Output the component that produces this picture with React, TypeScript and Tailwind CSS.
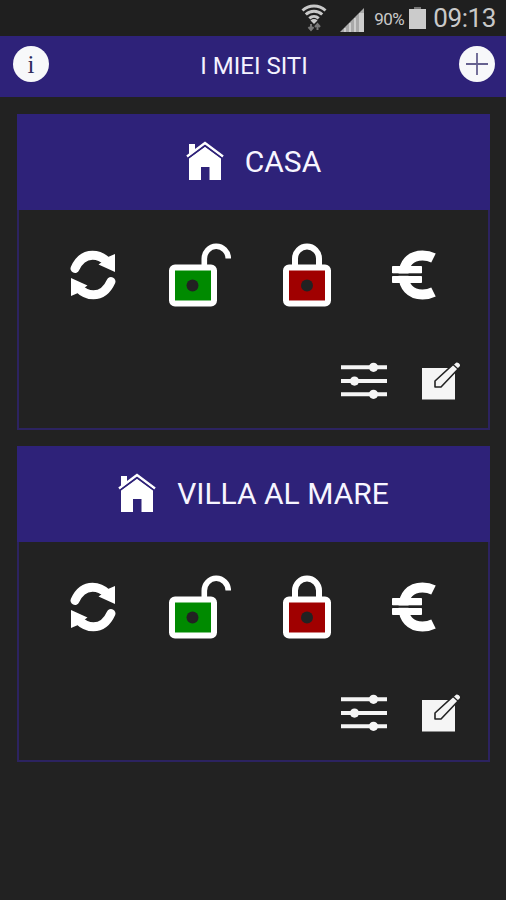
interface SiteProps {
  name: string;
}

function StatusBar() {
  return (
    <div className="flex h-9 items-center justify-end bg-[#1f1f1f] pr-[10px] text-[#c9c9c9]">
      <svg width="26" height="28" viewBox="0 0 26 28" fill="none" className="mr-[13px]">
        <path d="M1.5 6.500a17 17 0 0 1 23 0M4.800 10.500a12 12 0 0 1 16.400 0M8.300 14.300a7 7 0 0 1 9.400 0" stroke="#c9c9c9" strokeWidth="3" />
        <path d="M13 20l-3.500-3.500a5 5 0 0 1 7 0z" fill="#c9c9c9" />
        <path d="M10 20v6M7.500 23l2.500 3 2.500-3M16.500 26v-6M14 23l2.500-3 2.500 3" stroke="#777" strokeWidth="2" />
      </svg>
      <svg width="24" height="24" viewBox="0 0 24 24" className="mt-[3px] mr-[10px]">
        <path d="M0 24L24 0v24z" fill="#a9a9a9" />
        <path d="M4 20h2v4H4zM9 15h2v9H9zM14 10h2v14h-2zM19 5h5v19h-5z" fill="#cecece" />
      </svg>
      <span className="mt-[2px] mr-[5px] text-[17px] leading-none tracking-[-0.5px]">90%</span>
      <svg width="17" height="22" viewBox="0 0 17 22" className="mr-[7px]">
        <path d="M5 0h7v2H5z" fill="#777" />
        <path d="M0 2h17v20H0z" fill="#cbcbcb" />
      </svg>
      <span className="text-[26px] leading-none tracking-[-0.4px]">09:13</span>
    </div>
  );
}

function Header() {
  return (
    <header className="flex h-[61px] items-center justify-between bg-[#2e2279] pr-[11px] pb-[5px] pl-[13px]">
      <button className="flex size-9 items-center justify-center rounded-full bg-[#f7f8fa] font-['Liberation_Serif',serif] text-[25px] leading-none text-[#2d2b5c]">
        i
      </button>
      <h1 className="mt-[3px] text-[24px] leading-none text-[#f4f2ff]">I MIEI SITI</h1>
      <button className="flex size-9 items-center justify-center rounded-full bg-[#f7f8fa]">
        <svg width="22" height="22" viewBox="0 0 22 22">
          <path d="M11 0v22M0 11h22" stroke="#65618f" strokeWidth="1.800" />
        </svg>
      </button>
    </header>
  );
}

function HouseIcon() {
  return (
    <svg width="38" height="40" viewBox="0 0 38 40" className="mr-[21px] mb-[2px]">
      <path d="M3 14V3h6v6z" fill="#fff" />
      <path d="M1 15.500L19 2l18 13.500" fill="none" stroke="#fff" strokeWidth="2.400" />
      <path d="M3 17.500L19 5.800l16 11.700V39H23.500V26h-8.500v13H3z" fill="#fff" />
      <path d="M2 17.300L19 4.700l17 12.600" fill="none" stroke="#2e2279" strokeWidth="1.200" />
    </svg>
  );
}

function SyncArrow() {
  return (
    <>
      <path d="M6 19.500C10.500 9.500 16.500 6.200 23.500 6.200c6 0 10.500 2.300 14.500 6.300" fill="none" stroke="#fff" strokeWidth="9" strokeLinecap="round" />
      <path d="M46 5v18L29.500 15.500l3.500-2.500 6-5z" fill="#fff" />
    </>
  );
}

function SyncIcon() {
  return (
    <svg width="48" height="52" viewBox="0 0 48 52">
      <SyncArrow />
      <g transform="rotate(180 24 26)">
        <SyncArrow />
      </g>
    </svg>
  );
}

function UnlockIcon() {
  return (
    <svg width="62" height="64" viewBox="0 0 62 64">
      <path d="M35.300 24V16a12 12.500 0 0 1 24-0.500" fill="none" stroke="#fff" strokeWidth="5.600" />
      <rect x="3" y="24.500" width="42" height="36" rx="3" fill="#008a00" stroke="#fff" strokeWidth="6" />
      <circle cx="23.500" cy="42.500" r="6" fill="#222" />
    </svg>
  );
}

function LockIcon() {
  return (
    <svg width="48" height="64" viewBox="0 0 48 64">
      <path d="M12 24v-8.500a12 12 0 0 1 24 0V24" fill="none" stroke="#fff" strokeWidth="6" />
      <rect x="3" y="24.500" width="42" height="36" rx="3" fill="#a00000" stroke="#fff" strokeWidth="6" />
      <circle cx="24" cy="42.500" r="6" fill="#222" />
    </svg>
  );
}

function EuroIcon() {
  return (
    <svg width="46" height="50" viewBox="0 0 46 50" fill="none" stroke="#fff">
      <path d="M42.500 8C38.500 6 34.500 5.500 31.500 5.500 19 5.500 12.500 14 12.500 25S19 44.500 31.500 44.500c3 0 7-.5 11-2.500" strokeWidth="10" />
      <path d="M1.500 16.500h29v6.500h-29zM1.500 26.500h29v6h-29z" fill="#fff" strokeWidth="1" strokeLinejoin="round" />
      <path d="M1 24.700h29.500" stroke="#222" strokeWidth="2.200" />
    </svg>
  );
}

function SlidersIcon() {
  return (
    <svg width="46" height="38" viewBox="0 0 46 38" fill="#f5f5f5">
      <path d="M0 3.300h46v4H0zM0 17.100h46v4H0zM0 30.300h46v4H0z" />
      <circle cx="32.500" cy="5.300" r="4.600" />
      <circle cx="13.500" cy="19.100" r="4.600" />
      <circle cx="32.500" cy="32.300" r="4.600" />
    </svg>
  );
}

function EditIcon() {
  return (
    <svg width="40" height="38" viewBox="0 0 40 38">
      <path d="M0 6h33v31.500H0z" fill="#f5f5f5" />
      <path d="M13 25v-6L33.500.2c2-1.500 6.500 1.500 5 4.300L19 25z" fill="#f5f5f5" stroke="#222" strokeWidth="1.600" strokeLinejoin="round" />
      <path d="M31 2.500l5.500 5" stroke="#222" strokeWidth="1.200" />
    </svg>
  );
}

function SiteCard({ name }: SiteProps) {
  return (
    <section className="h-[316px] border-2 border-t-0 border-[#2c2360]">
      <div className="-mx-[2px] flex h-24 items-center justify-center bg-[#2e2279]">
        <HouseIcon />
        <h2 className="text-[30px] leading-none text-[#f7f5ff]">{name}</h2>
      </div>
      <div className="mx-[21px] mt-[33px] grid h-16 grid-cols-4 place-items-center">
        <SyncIcon />
        <UnlockIcon />
        <LockIcon />
        <EuroIcon />
      </div>
      <div className="mt-[55px] mr-[26px] flex justify-end gap-[35px]">
        <SlidersIcon />
        <EditIcon />
      </div>
    </section>
  );
}

export default function App() {
  return (
    <div className="h-[900px] w-[506px] overflow-hidden bg-[#222222] font-['Roboto',sans-serif]">
      <StatusBar />
      <Header />
      <main className="flex flex-col gap-4 pt-[17px] pr-4 pl-[17px]">
        <SiteCard name="CASA" />
        <SiteCard name="VILLA AL MARE" />
      </main>
    </div>
  );
}
